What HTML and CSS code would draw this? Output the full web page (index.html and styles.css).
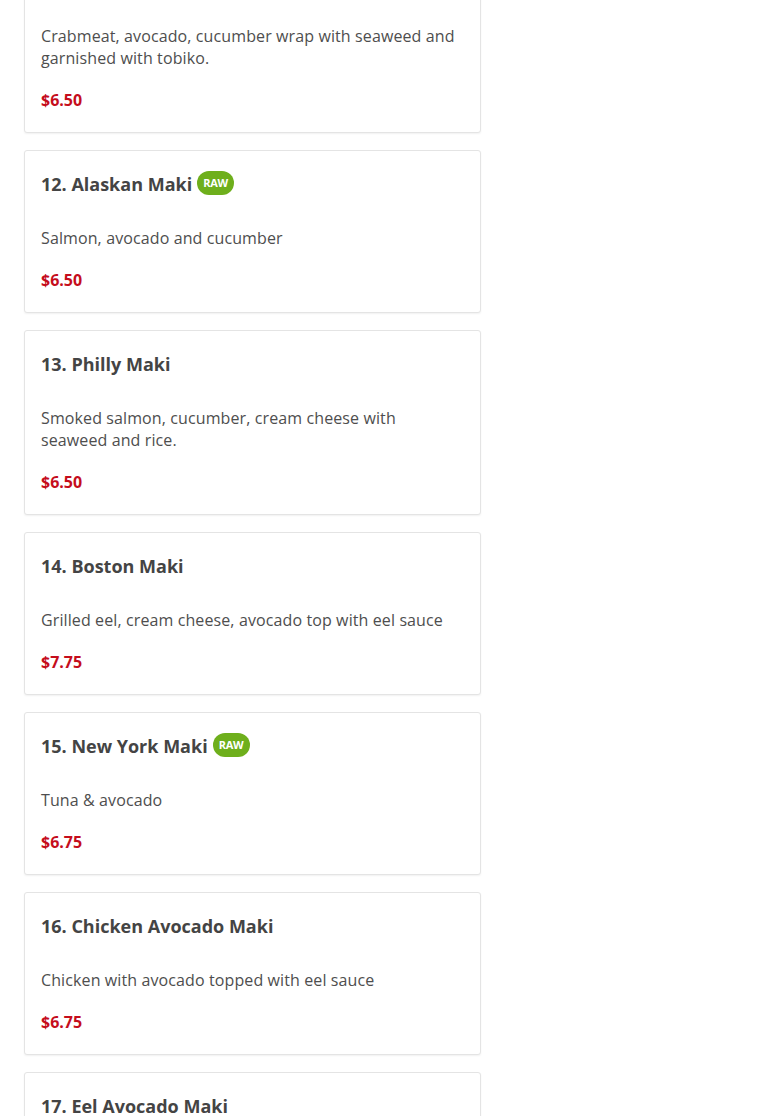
FILE: index.html
```html
<!DOCTYPE html>
<html>
<head>
<meta charset="utf-8">
<link rel="stylesheet" href="styles.css">
</head>
<body>
<div class="menu">
  <div class="card">
    <div class="title-row"><h3 class="title">11. California Maki</h3></div>
    <p class="desc">Crabmeat, avocado, cucumber wrap with seaweed and garnished with tobiko.</p>
    <div class="price">$6.50</div>
  </div>
  <div class="card">
    <div class="title-row"><h3 class="title">12. Alaskan Maki</h3><span class="badge">RAW</span></div>
    <p class="desc">Salmon, avocado and cucumber</p>
    <div class="price">$6.50</div>
  </div>
  <div class="card">
    <div class="title-row"><h3 class="title">13. Philly Maki</h3></div>
    <p class="desc">Smoked salmon, cucumber, cream cheese with seaweed and rice.</p>
    <div class="price">$6.50</div>
  </div>
  <div class="card">
    <div class="title-row"><h3 class="title">14. Boston Maki</h3></div>
    <p class="desc">Grilled eel, cream cheese, avocado top with eel sauce</p>
    <div class="price">$7.75</div>
  </div>
  <div class="card">
    <div class="title-row"><h3 class="title">15. New York Maki</h3><span class="badge">RAW</span></div>
    <p class="desc">Tuna &amp; avocado</p>
    <div class="price">$6.75</div>
  </div>
  <div class="card">
    <div class="title-row"><h3 class="title">16. Chicken Avocado Maki</h3></div>
    <p class="desc">Chicken with avocado topped with eel sauce</p>
    <div class="price">$6.75</div>
  </div>
  <div class="card">
    <div class="title-row"><h3 class="title">17. Eel Avocado Maki</h3></div>
    <p class="desc">Grilled eel and avocado</p>
    <div class="price">$6.75</div>
  </div>
</div>
</body>
</html>
```
FILE: styles.css
```css
html, body {
  margin: 0;
  padding: 0;
  background: #ffffff;
  overflow: hidden;
}
body {
  font-family: "Open Sans", "Noto Sans", sans-serif;
}
.menu {
  width: 457px;
  margin: -52px 0 0 24px;
  display: flex;
  flex-direction: column;
  gap: 17px;
}
.card {
  box-sizing: border-box;
  border: 1px solid #e4e4e4;
  border-radius: 3px;
  box-shadow: 0 1px 2px rgba(0,0,0,0.06);
  padding: 16px 16px 21px 16px;
  background: #fff;
}
.title-row {
  display: flex;
  align-items: center;
  height: 34px;
}
.title {
  margin: 0;
  font-size: 18px;
  font-weight: 700;
  color: #444444;
  line-height: 34px;
}
.badge {
  margin-left: 5px;
  margin-top: -3px;
  height: 24px;
  padding: 0 6px;
  border-radius: 12px;
  background: #6eaf1c;
  color: #ffffff;
  font-size: 11px;
  font-weight: 700;
  line-height: 24px;
  letter-spacing: -0.2px;
}
.desc {
  margin: 26px 0 0 0;
  font-size: 16px;
  line-height: 22px;
  letter-spacing: 0.11px;
  color: #4e4e4e;
}
.price {
  margin-top: 20px;
  font-size: 16px;
  font-weight: 700;
  line-height: 22px;
  color: #c50d1c;
}
```
